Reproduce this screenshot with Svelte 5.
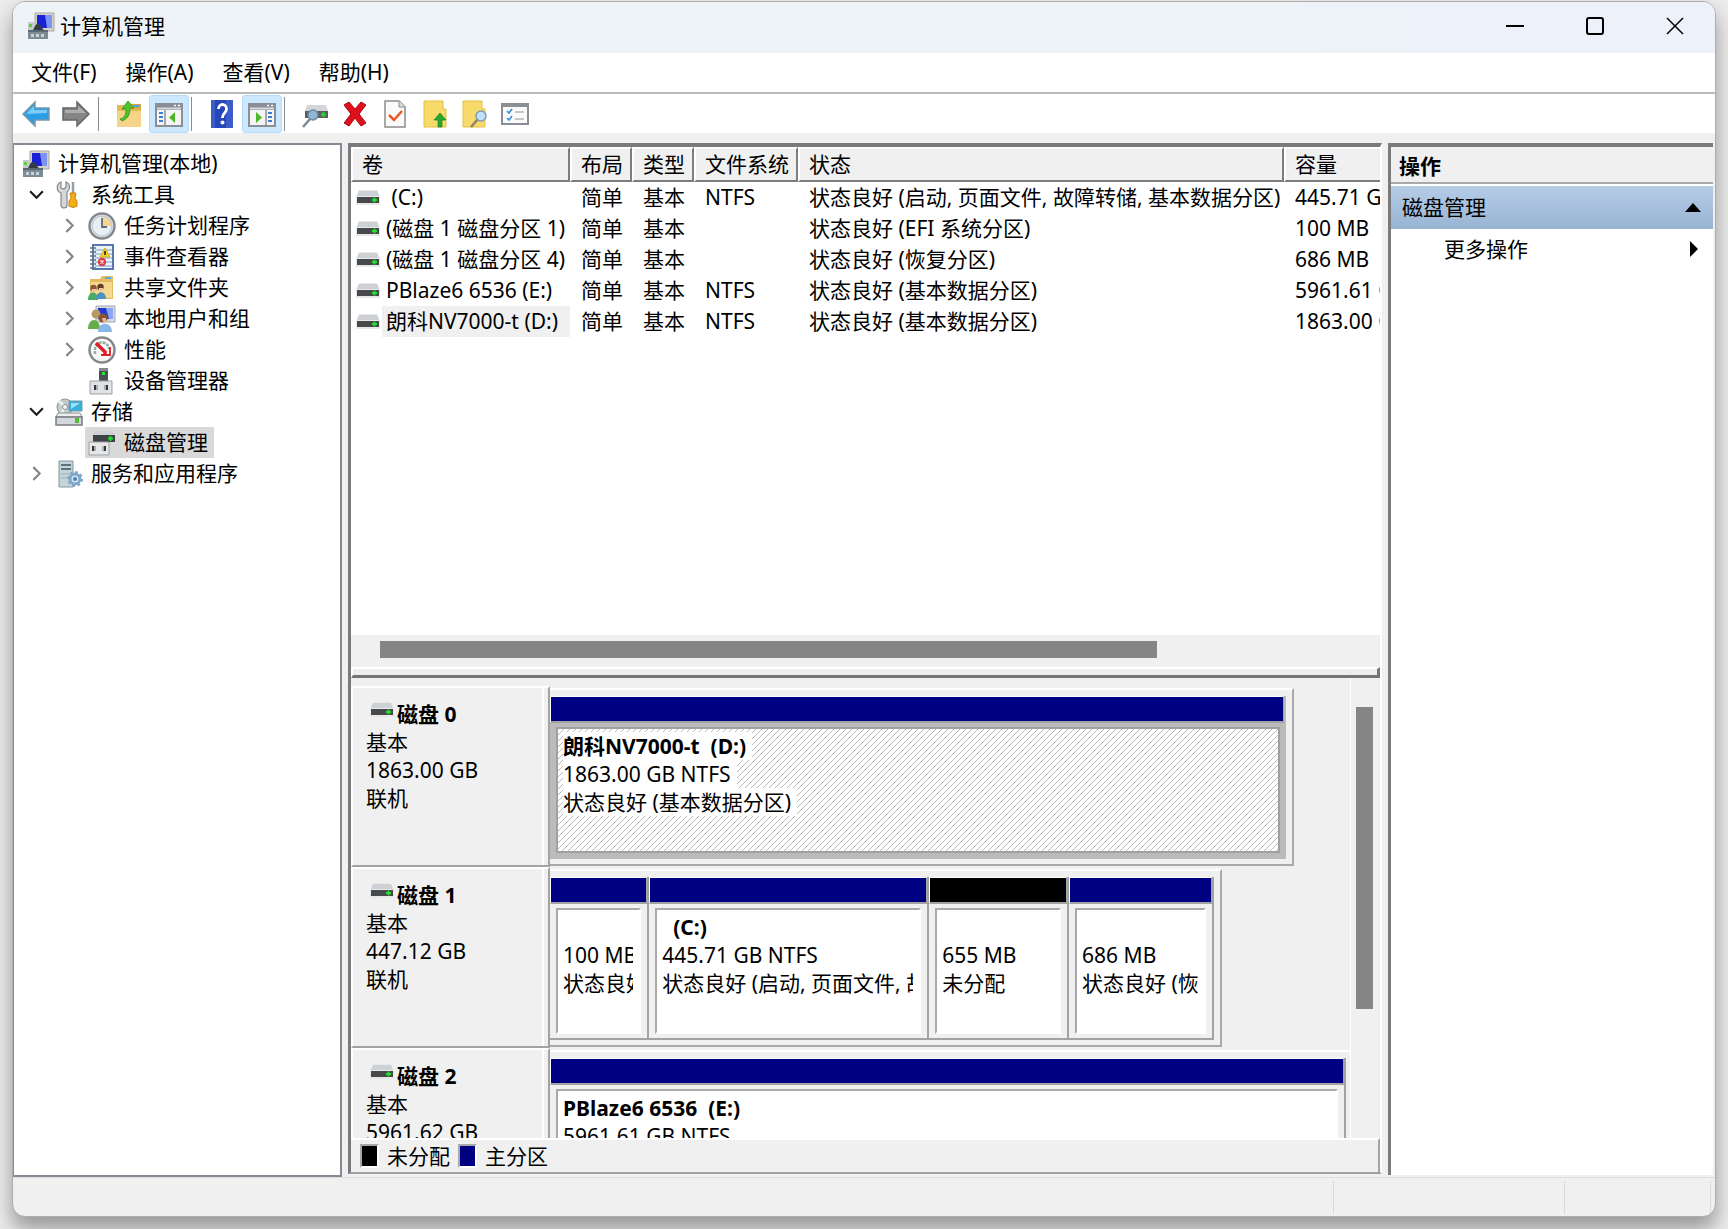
<script lang="ts">
    interface TreeNode {
        label: string;
        icon: string;
        depth: number;
        state?: "open" | "closed";
        selected?: boolean;
    }

    interface Part {
        name?: string;
        size: string;
        status: string;
        share: number;
        kind: "primary" | "free";
        selected?: boolean;
    }

    const menus = ["文件(F)", "操作(A)", "查看(V)", "帮助(H)"];

    const tools = [
        [
            { icon: "back", label: "后退" },
            { icon: "forward", label: "前进" },
        ],
        [
            { icon: "folder-up", label: "上移一级" },
            { icon: "pane-left", label: "显示/隐藏控制台树", on: true },
        ],
        [
            { icon: "help", label: "帮助" },
            { icon: "pane-right", label: "显示/隐藏操作窗格", on: true },
        ],
        [
            { icon: "rescan", label: "重新扫描磁盘" },
            { icon: "delete", label: "删除" },
            { icon: "check", label: "属性" },
            { icon: "note-up", label: "打开" },
            { icon: "note-find", label: "浏览" },
            { icon: "options", label: "设置" },
        ],
    ];

    const tree: TreeNode[] = [
        { label: "计算机管理(本地)", icon: "computer", depth: 0 },
        { label: "系统工具", icon: "tools", depth: 1, state: "open" },
        { label: "任务计划程序", icon: "clock", depth: 2, state: "closed" },
        { label: "事件查看器", icon: "events", depth: 2, state: "closed" },
        { label: "共享文件夹", icon: "shared", depth: 2, state: "closed" },
        { label: "本地用户和组", icon: "users", depth: 2, state: "closed" },
        { label: "性能", icon: "perf", depth: 2, state: "closed" },
        { label: "设备管理器", icon: "device", depth: 2 },
        { label: "存储", icon: "storage", depth: 1, state: "open" },
        { label: "磁盘管理", icon: "diskmgmt", depth: 2, selected: true },
        { label: "服务和应用程序", icon: "services", depth: 1, state: "closed" },
    ];

    const columns = ["卷", "布局", "类型", "文件系统", "状态", "容量"];

    const volumes = [
        { name: "\u00a0(C:)", fs: "NTFS", status: "状态良好 (启动, 页面文件, 故障转储, 基本数据分区)", size: "445.71 GB" },
        { name: "(磁盘 1 磁盘分区 1)", fs: "", status: "状态良好 (EFI 系统分区)", size: "100 MB" },
        { name: "(磁盘 1 磁盘分区 4)", fs: "", status: "状态良好 (恢复分区)", size: "686 MB" },
        { name: "PBlaze6 6536 (E:)", fs: "NTFS", status: "状态良好 (基本数据分区)", size: "5961.61 GB" },
        { name: "朗科NV7000-t (D:)", fs: "NTFS", status: "状态良好 (基本数据分区)", size: "1863.00 GB", selected: true },
    ];

    const disks: { name: string; size: string; width: number; parts: Part[] }[] = [
        {
            name: "磁盘 0",
            size: "1863.00 GB",
            width: 93,
            parts: [
                { name: "朗科NV7000-t  (D:)", size: "1863.00 GB NTFS", status: "状态良好 (基本数据分区)", share: 1, kind: "primary", selected: true },
            ],
        },
        {
            name: "磁盘 1",
            size: "447.12 GB",
            width: 84,
            parts: [
                { size: "100 MB", status: "状态良好 (EFI 系统分区)", share: 98, kind: "primary" },
                { name: "  (C:)", size: "445.71 GB NTFS", status: "状态良好 (启动, 页面文件, 故障转储, 基本数据分区)", share: 280, kind: "primary" },
                { size: "655 MB", status: "未分配", share: 139, kind: "free" },
                { size: "686 MB", status: "状态良好 (恢复分区)", share: 144, kind: "primary" },
            ],
        },
        {
            name: "磁盘 2",
            size: "5961.62 GB",
            width: 100,
            parts: [
                { name: "PBlaze6 6536  (E:)", size: "5961.61 GB NTFS", status: "状态良好 (基本数据分区)", share: 1, kind: "primary" },
            ],
        },
    ];
</script>

<svelte:head>
    <title>计算机管理</title>
</svelte:head>

{#snippet icon(name: string)}
    <svg class="icon" viewBox="0 0 28 28" aria-hidden="true">
        {#if name === "back"}
            <path d="M1 14 13 2v6h14v12H13v6z" fill="#2b9fe6" stroke="#7b97a8" stroke-width="1.5" />
            <path d="M4 14l8-8v4h13v3z" fill="#7dcdf6" />
        {:else if name === "forward"}
            <path d="M27 14 15 2v6H1v12h14v6z" fill="#858585" stroke="#666" stroke-width="1.5" />
            <path d="M24 13l-8-7v4H3v3z" fill="#adadad" />
        {:else if name === "folder-up"}
            <path d="M2 5h10l2 2h12v20H2z" fill="#e3b957" />
            <path d="M15 4h11v5H15z" fill="#d9a53d" />
            <path d="M19 5h5v2h-5z" fill="#4aa3e8" />
            <path d="M2 11h24v16H2z" fill="#f4d488" />
            <path d="M5 19c5-1 6-5 6-10H7l6-8 6 7h-4c0 8-3 11-8 13z" fill="#4fc32b" stroke="#2f8f1c" stroke-width=".8" />
        {:else if name === "pane-left" || name === "pane-right"}
            <g transform={name === "pane-right" ? "matrix(-1 0 0 1 28 0)" : undefined}>
                <path d="M1 4h26v22H1z" fill="#f5f5f5" stroke="#8a8f96" stroke-width="2" />
                <path d="M1 3h26v7H1z" fill="#8a8f96" />
                <path d="M2 8.500h24" stroke="#d8dbe0" stroke-width="2" />
                <path d="M10 10v15" stroke="#8a8f96" stroke-width="1.5" />
                <path d="M4 13h4M4 17h4M4 21h4" stroke="#3d7fd0" stroke-width="2" />
                <path d="M20 12v11l-6-5.500z" fill="#4fb52b" />
            </g>
            <path d="M19 5.500h2M23 5.500h2" stroke="#fff" stroke-width="1.5" />
        {:else if name === "help"}
            <path d="M3 0h22v28H3z" fill="#2746b8" />
            <path d="M3 0h4v28H3z" fill="#3d5cc8" />
            <path d="M18 0h7v28h-7z" fill="#3c5ccc" />
            <path d="M10.500 9c0-6 8-6 8 0 0 4-4 4-4 9" fill="none" stroke="#fff" stroke-width="2.800" />
            <circle cx="14.500" cy="22.500" r="2" fill="#fff" />
        {:else if name === "rescan"}
            <path d="M6 5h19l2 6H4z" fill="#d3d5d9" />
            <path d="M4 11h23v7H4z" fill="#595c60" />
            <path d="M20 14.500h5M22.500 12v5" stroke="#1fdc2c" stroke-width="2" />
            <path d="M2 27l7-8" stroke="#7d8a96" stroke-width="2.500" />
            <circle cx="12" cy="15" r="5" fill="#8fb8d6" stroke="#6f889b" stroke-width="1.500" />
        {:else if name === "delete"}
            <path d="M3 5l5-3 6 7 6-7 5 3-7 9 7 9-5 3-6-8-6 8-5-3 7-9z" fill="#df0f1c" stroke="#a80812" />
        {:else if name === "check"}
            <path d="M4 1h14l6 6v20H4z" fill="#fafafa" stroke="#8c8c8c" stroke-width="1.500" />
            <path d="M18 1v6h6" fill="#ddd" stroke="#8c8c8c" />
            <path d="M8 15l5 5 8-9" fill="none" stroke="#e65b27" stroke-width="2.500" />
        {:else if name === "note-up"}
            <path d="M3 1h19v8h3v18H3z" fill="#f7da6c" stroke="#e4c141" />
            <path d="M13 20l6-7 6 7h-4v7h-4v-7z" fill="#25a82c" stroke="#1b8222" stroke-width=".7" />
        {:else if name === "note-find"}
            <path d="M2 1h19v8h3v18H2z" fill="#f7da6c" stroke="#e4c141" />
            <path d="M10 27l7-8" stroke="#8d8468" stroke-width="2.500" />
            <circle cx="20" cy="16" r="5" fill="#c2e1f6" stroke="#7c9db5" stroke-width="1.500" />
        {:else if name === "options"}
            <path d="M1 4h26v20H1z" fill="#fafafa" stroke="#8a8f96" stroke-width="2" />
            <path d="M1 4h26v3H1z" fill="#8a8f96" />
            <path d="M6 11l2 2 3-4M6 18l2 2 3-4" fill="none" stroke="#2f8de4" stroke-width="1.600" />
            <path d="M14 12h9M14 19h9" stroke="#b5b5b5" stroke-width="1.500" />
        {:else if name === "computer"}
            <path d="M8 1h19v18H8z" fill="#d5d3c9" stroke="#a9a8a2" />
            <path d="M10 3h15v13H10z" fill="#1a20d8" />
            <path d="M18 3h7v13h-5z" fill="#7d92f2" />
            <path d="M1 10h6v8H1z" fill="#c3ccc6" />
            <path d="M2 12h3v3H2z" fill="#55d337" />
            <path d="M6 18c2-3 2-6 5-6 4 0 3 4 6 6z" fill="#333b46" />
            <path d="M1 18h20v9H1z" fill="#7b8c95" />
            <path d="M1 18h20v2H1z" fill="#596a73" />
            <path d="M4 22h3v3H4zM9 22h3v3H9zM14 22h3v3h-3z" fill="#c9d3d8" />
        {:else if name === "tools"}
            <path d="M6 1v6l3 1 2-2V1c5 2 4 8 1 10v13c0 4-6 4-6 0V12C1 10 1 3 6 1z" fill="#d5d8da" stroke="#83888c" stroke-width="1.200" />
            <path d="M18 1v12" stroke="#9a9da0" stroke-width="2.500" />
            <path d="M15 12h6l-1 5 2 3v5q-4 3-8 0v-5l2-3z" fill="#f3ae18" stroke="#c98409" />
        {:else if name === "clock"}
            <circle cx="14" cy="14" r="12.500" fill="#e9eff4" stroke="#85888b" stroke-width="2.500" />
            <path d="M14 14V4a10 10 0 0 1 10 10z" fill="#f6d592" />
            <circle cx="14" cy="14" r="10" fill="none" stroke="#c4cdd5" stroke-width="1.500" />
            <path d="M14 6v9h5" fill="none" stroke="#566f86" stroke-width="1.800" />
        {:else if name === "events"}
            <path d="M5 2h20v24H5z" fill="#eef4fc" stroke="#5977ae" stroke-width="2" />
            <path d="M7 7h17M7 11h17M7 15h17M7 19h17M7 23h17" stroke="#7d9ed2" stroke-width="1.200" />
            <path d="M2 5h6M2 9h6M2 13h6M2 17h6M2 21h6M2 25h6" stroke="#65717f" stroke-width="1.500" />
            <path d="M17 5l5 9H12z" fill="#f8d426" stroke="#d5ae12" />
            <path d="M17 8v4" stroke="#222" stroke-width="1.600" />
            <circle cx="14" cy="19" r="4.200" fill="#d9404a" />
            <path d="M12.500 17.500l3 3M15.500 17.500l-3 3" stroke="#fff" stroke-width="1.200" />
        {:else if name === "shared"}
            <path d="M2 5h10l2-3h11v23H2z" fill="#e3bb60" />
            <path d="M3 8h21v16H3z" fill="#f6d98e" />
            <path d="M17 3h6v2h-6z" fill="#5ca9e8" />
            <path d="M0 26c0-10 10-10 10 0z" fill="#4aab63" />
            <path d="M8 25c0-9 10-9 10 0z" fill="#4c94bf" />
            <circle cx="5.500" cy="14" r="3.200" fill="#8a5a3a" />
            <circle cx="12.500" cy="13" r="3.200" fill="#5f3e2a" />
            <path d="M4 15h4v3H4zM11 14h4v3h-4z" fill="#f1c7a0" />
        {:else if name === "users"}
            <path d="M8 1h19v16H8z" fill="#d8dbde" stroke="#a4a9ae" />
            <path d="M10 3h15v11H10z" fill="#2438cf" />
            <path d="M18 3h7v11h-4z" fill="#8ba5f2" />
            <path d="M0 24c0-12 12-12 12 0z" fill="#69ad4a" />
            <circle cx="8" cy="9" r="4.500" fill="#b79a63" />
            <path d="M10 27c0-11 14-11 14 0z" fill="#86b8e8" />
            <circle cx="15" cy="13" r="4.500" fill="#8a5432" />
            <path d="M14 13h4v4h-3z" fill="#e8b78b" />
        {:else if name === "perf"}
            <circle cx="14" cy="14" r="12.500" fill="#fafafa" stroke="#85888b" stroke-width="2.500" />
            <path d="M7 18v-4a7 7 0 0 1 14-1" fill="none" stroke="#8fb09b" stroke-width="2.500" stroke-dasharray="3 1" />
            <path d="M8 7l9 9v3" fill="none" stroke="#df1f28" stroke-width="3.500" />
            <path d="M13 19h9v-8" fill="none" stroke="#df1f28" stroke-width="1.800" />
        {:else if name === "device"}
            <path d="M11 1h9v13h-9z" fill="#4b4f52" />
            <path d="M11 1h9v3h-9z" fill="#85888a" />
            <path d="M14 5h3v3h-3z" fill="#2ee03a" />
            <path d="M2 14h22v13H2z" fill="#dfe1e4" stroke="#9da1a5" />
            <path d="M6 18h2v5H6zM18 18h2v5h-2z" fill="#33373a" />
            <path d="M8 18h2v5H8zM16 18h2v5h-2z" fill="#aaaeb2" />
        {:else if name === "storage"}
            <circle cx="10" cy="9" r="8" fill="#c3ccca" stroke="#919896" />
            <path d="M10 9L4 3M10 9l-4 7" stroke="#e9f4ef" stroke-width="3" />
            <circle cx="10" cy="9" r="2.500" fill="#fff" stroke="#888" />
            <path d="M14 3h13v10H14z" fill="#38b0dc" stroke="#7897a5" />
            <path d="M16 5h9L16 11z" fill="#9be1f4" />
            <path d="M3 15h22l2 4H1z" fill="#eee" stroke="#8a8d90" />
            <path d="M1 19h26v8H1z" fill="#d4d7db" stroke="#777b80" stroke-width="1.500" />
            <path d="M20 20h4v5h-4z" fill="#55bd2e" />
        {:else if name === "diskmgmt"}
            <path d="M7 2h17l3 4H4z" fill="#cfd2d5" />
            <path d="M5 6h22v7H5z" fill="#3f4346" />
            <path d="M20 9.500h5M22.500 7v5" stroke="#25e034" stroke-width="1.800" />
            <path d="M1 13h20v13H1z" fill="#e6e7e9" stroke="#9da1a5" />
            <path d="M4 17h2v5H4zM16 17h2v5h-2z" fill="#33373a" />
            <path d="M6 17h2v5H6zM14 17h2v5h-2z" fill="#aaaeb2" />
        {:else if name === "services"}
            <path d="M4 1h14v26H4z" fill="#c5d3da" stroke="#8597a1" />
            <path d="M6 5h10M6 9h10" stroke="#5d717d" stroke-width="2" />
            <path d="M6 14h9M6 18h7" stroke="#9db0bb" />
            <circle cx="20" cy="19" r="5" fill="#d5e6f4" stroke="#7fa6c9" stroke-width="3" />
            <circle cx="20" cy="19" r="7" fill="none" stroke="#7fa6c9" stroke-width="2" stroke-dasharray="2.600 2.900" />
            <circle cx="20" cy="19" r="2" fill="#4d81b0" />
        {/if}
    </svg>
{/snippet}

{#snippet drive()}
    <svg class="drive" viewBox="0 0 24 16" aria-hidden="true">
        <path d="M3 0h18l3 7v8H0V7z" fill="#e6e8ea" />
        <path d="M3 1h18l2 5H1z" fill="#cdd0d4" />
        <path d="M1 7h22v6H1z" fill="#48494b" />
        <path d="M16 10h5M18.500 7.500v5" stroke="#29dd35" stroke-width="1.800" />
    </svg>
{/snippet}

<div class="desktop">
    <div class="window">
        <header class="titlebar">
            {@render icon("computer")}
            <h1>计算机管理</h1>
            <div class="caption">
                <button type="button" aria-label="最小化">
                    <svg viewBox="0 0 20 20"><path d="M1 10h18" /></svg>
                </button>
                <button type="button" aria-label="最大化">
                    <svg viewBox="0 0 20 20"><rect x="2" y="2" width="16" height="16" rx="2" /></svg>
                </button>
                <button type="button" aria-label="关闭">
                    <svg class="thin" viewBox="0 0 20 20"><path d="M2 2l16 16M18 2L2 18" /></svg>
                </button>
            </div>
        </header>

        <nav class="menubar">
            {#each menus as menu}
                <button type="button">{menu}</button>
            {/each}
        </nav>

        <div class="toolbar" role="toolbar" aria-label="工具栏">
            {#each tools as group, i}
                {#if i > 0}
                    <span class="sep"></span>
                {/if}
                {#each group as tool}
                    <button type="button" class:on={tool.on} aria-label={tool.label}>
                        {@render icon(tool.icon)}
                    </button>
                {/each}
            {/each}
        </div>

        <main>
            <div class="tree" role="tree" aria-label="控制台树">
                {#each tree as node}
                    <div class="node depth-{node.depth}" role="treeitem" tabindex="-1" aria-selected={!!node.selected}>
                        {#if node.depth > 0}
                            <span class="twisty {node.state ?? ''}">
                                {#if node.state === "open"}
                                    <svg viewBox="0 0 16 16"><path d="M2 5l6 6 6-6" /></svg>
                                {:else if node.state === "closed"}
                                    <svg viewBox="0 0 16 16"><path d="M5 2l6 6-6 6" /></svg>
                                {/if}
                            </span>
                        {/if}
                        <span class="item" class:selected={node.selected}>
                            {@render icon(node.icon)}
                            {node.label}
                        </span>
                    </div>
                {/each}
            </div>

            <section class="content">
                <div class="volumes">
                    <div class="table-wrap">
                        <table>
                            <colgroup>
                                <col class="col-name" />
                                <col class="col-short" />
                                <col class="col-short" />
                                <col class="col-fs" />
                                <col class="col-status" />
                                <col class="col-size" />
                            </colgroup>
                            <thead>
                                <tr>
                                    {#each columns as column}
                                        <th scope="col">{column}</th>
                                    {/each}
                                </tr>
                            </thead>
                            <tbody>
                                {#each volumes as volume}
                                    <tr>
                                        <td class="name">
                                            <div>
                                                {@render drive()}
                                                <span class:selected={volume.selected}>{volume.name}</span>
                                            </div>
                                        </td>
                                        <td>简单</td>
                                        <td>基本</td>
                                        <td>{volume.fs}</td>
                                        <td>{volume.status}</td>
                                        <td>{volume.size}</td>
                                    </tr>
                                {/each}
                            </tbody>
                        </table>
                    </div>
                    <div class="hscroll"><div class="thumb"></div></div>
                    <div class="splitter"></div>
                </div>

                <div class="disks">
                    <div class="disk-list">
                        {#each disks as disk}
                            <div class="disk">
                                <div class="disk-info">
                                    <h2>{@render drive()}{disk.name}</h2>
                                    <p>基本</p>
                                    <p>{disk.size}</p>
                                    <p>联机</p>
                                </div>
                                <div class="strip-area">
                                    <div class="strip" class:full={disk.width === 100} style="width: {disk.width}%">
                                        {#each disk.parts as part}
                                            <div class="part {part.kind}" class:selected={part.selected} style="flex-grow: {part.share}">
                                                <div class="bar"></div>
                                                <div class="part-body">
                                                    <div class="box">
                                                        <div class="text">
                                                            <p><b>{part.name ?? "\u00a0"}</b></p>
                                                            <p><span>{part.size}</span></p>
                                                            <p><span>{part.status}</span></p>
                                                        </div>
                                                    </div>
                                                </div>
                                            </div>
                                        {/each}
                                    </div>
                                </div>
                            </div>
                        {/each}
                    </div>
                    <div class="vscroll"><div class="thumb"></div></div>
                </div>

                <div class="legend">
                    <span class="swatch free"></span>未分配
                    <span class="swatch primary"></span>主分区
                </div>
            </section>

            <aside class="actions">
                <h2>操作</h2>
                <button type="button" class="group">
                    磁盘管理
                    <svg viewBox="0 0 16 16"><path d="M0 12h16L8 3z" /></svg>
                </button>
                <button type="button" class="more">
                    更多操作
                    <svg viewBox="0 0 16 16"><path d="M5 0v16l8-8z" /></svg>
                </button>
            </aside>
        </main>

        <footer class="statusbar">
            <span class="pane"></span>
            <span class="pane mid"></span>
            <span class="pane end"></span>
        </footer>
    </div>
</div>

<style>
    :global(body) {
        background: #ececec;
    }

    .desktop {
        box-sizing: border-box;
        display: flex;
        height: 100vh;
        padding: 1px 12px 12px;
        overflow: hidden;
        font: 21px/31px "Noto Sans", "Noto Sans CJK SC", sans-serif;
        color: #000;
    }
    .desktop * {
        box-sizing: border-box;
    }

    h1,
    h2,
    p {
        margin: 0;
        font-size: 21px;
        font-weight: 400;
    }
    button {
        padding: 0;
        border: 0;
        background: none;
        color: inherit;
        font: inherit;
    }
    .icon {
        flex: none;
        width: 28px;
        height: 28px;
    }
    .drive {
        flex: none;
        width: 24px;
        height: 16px;
    }

    .window {
        display: flex;
        flex: 1;
        flex-direction: column;
        min-width: 0;
        border: 1px solid #adadad;
        border-radius: 13px;
        background: #f0f0f0;
        box-shadow: 0 12px 20px rgba(0, 0, 0, 0.36);
        overflow: hidden;
    }

    .titlebar {
        display: flex;
        flex: none;
        align-items: center;
        gap: 5px;
        height: 51px;
        padding: 0 0 3px 14px;
        background: linear-gradient(90deg, #eef3f7 70%, #edf2fa 85%);
    }
    .caption {
        display: flex;
        margin-left: auto;
    }
    .caption button {
        display: flex;
        align-items: center;
        justify-content: center;
        width: 80px;
        height: 48px;
    }
    .caption svg {
        width: 20px;
        height: 20px;
        fill: none;
        stroke: #000;
        stroke-width: 2;
    }
    .caption svg.thin {
        stroke-width: 1.5;
    }

    .menubar {
        display: flex;
        flex: none;
        gap: 3px;
        height: 41px;
        padding-left: 5px;
        border-bottom: 2px solid #b9babc;
        background: #fff;
    }
    .menubar button {
        padding: 0 13px;
    }

    .toolbar {
        display: flex;
        flex: none;
        height: 39px;
        padding: 1px 0 0 3px;
        background: #fff;
    }
    .toolbar button {
        display: flex;
        align-items: center;
        justify-content: center;
        width: 40px;
        height: 38px;
    }
    .toolbar .on {
        border: 1px solid #b5dcf9;
        border-radius: 3px;
        background: #cce8ff;
    }
    .sep {
        width: 1px;
        margin: 2px 10px 2px 2px;
        background: #8d8d8d;
    }

    main {
        display: grid;
        flex: 1;
        grid-template-columns: 329px minmax(0, 1fr) 327px;
        column-gap: 6px;
        min-height: 0;
        padding-top: 10px;
    }

    .tree {
        padding-top: 3px;
        border: 2px solid #858b94;
        border-left-width: 1px;
        background: #fff;
    }
    .node {
        display: flex;
        height: 31px;
        white-space: nowrap;
    }
    .depth-0 {
        padding-left: 5px;
    }
    .depth-1 {
        padding-left: 8px;
    }
    .depth-2 {
        padding-left: 41px;
    }
    .twisty {
        display: flex;
        align-items: center;
        justify-content: center;
        width: 28px;
        margin-right: 2px;
    }
    .twisty svg {
        width: 17px;
        height: 17px;
        fill: none;
        stroke: #868686;
        stroke-width: 2;
    }
    .twisty.open svg {
        stroke: #1b1b1b;
    }
    .item {
        display: flex;
        align-items: center;
        gap: 8px;
        padding: 0 6px 0 3px;
    }
    .item.selected {
        background: #d9d9d9;
    }

    .content {
        display: flex;
        flex-direction: column;
        min-height: 0;
        margin-bottom: 3px;
        border: solid;
        border-width: 4px 2px 2px 3px;
        border-color: #7b7b7b #fff #a0a0a0 #7b7b7b;
    }

    .volumes {
        display: flex;
        flex: 532 1 0;
        flex-direction: column;
        min-height: 0;
        background: #fff;
    }
    .table-wrap {
        flex: 1;
        min-height: 0;
        overflow: hidden;
    }
    table {
        width: 1083px;
        border-collapse: separate;
        border-spacing: 0;
        table-layout: fixed;
    }
    .col-name {
        width: 219px;
    }
    .col-short {
        width: 62px;
    }
    .col-fs {
        width: 104px;
    }
    .col-status {
        width: 486px;
    }
    .col-size {
        width: 150px;
    }
    th {
        height: 35px;
        padding: 0 0 0 9px;
        border: 2px solid;
        border-color: #fff #7d7d7d #7d7d7d #fff;
        background: #f0f0f0;
        font-weight: 400;
        text-align: left;
        white-space: nowrap;
    }
    td {
        height: 31px;
        padding: 0 0 0 11px;
        white-space: nowrap;
    }
    td.name {
        padding-left: 5px;
    }
    .name div {
        display: flex;
        align-items: center;
        gap: 2px;
    }
    .name span {
        flex: 1;
        padding-left: 4px;
    }
    .name .selected {
        background: #f0f0f0;
    }

    .hscroll {
        flex: none;
        height: 32px;
        padding: 6px 0;
        background: #f0f0f0;
    }
    .hscroll .thumb {
        width: 75.5%;
        height: 17px;
        margin-left: 29px;
        background: #858585;
    }
    .splitter {
        flex: none;
        height: 11px;
        border: solid;
        border-width: 2px 3px 3px 2px;
        border-color: #fff #757575 #757575 #fff;
        background: #ededed;
    }

    .disks {
        display: flex;
        flex: 461 1 0;
        min-height: 0;
    }
    .disk-list {
        flex: 1;
        min-width: 0;
        padding-top: 8px;
        border-right: 1px solid #fff;
        overflow: hidden;
    }
    .disk {
        display: flex;
        height: 181px;
    }
    .disk-info {
        width: 199px;
        padding: 12px 0 0 13px;
        border: 2px solid;
        border-color: #fff #a3a3a3 #a3a3a3 #fff;
        line-height: 28px;
        box-shadow: inset -4px 0 0 #f0f0f0, inset -6px 0 0 #fff;
    }
    .disk-info h2 {
        display: flex;
        gap: 3px;
        padding-left: 4px;
        font-weight: 700;
        white-space: pre;
    }
    .disk-info .drive,
    .disk-info svg {
        margin-top: 2px;
    }
    .strip-area {
        flex: 1;
        min-width: 0;
        padding-top: 2px;
    }
    .strip {
        display: flex;
        height: 178px;
        padding: 6px 6px 5px 0;
        border: 2px solid;
        border-color: #fff #a9a9a9 #a9a9a9 transparent;
        border-left-width: 0;
    }
    .strip.full {
        padding-right: 4px;
        border-right: 0;
    }
    .part {
        display: flex;
        flex: 1 1 0;
        flex-direction: column;
        min-width: 0;
        border-right: 2px solid #a3a3a3;
        border-bottom: 2px solid #a3a3a3;
    }
    .bar {
        flex: none;
        height: 27px;
        border: 1px solid #fff;
        border-right-color: #a3a3a3;
        border-bottom: 2px solid #a3a3a3;
        background: #000082;
    }
    .free .bar {
        background: #000;
    }
    .part-body {
        display: flex;
        flex: 1;
        min-height: 0;
        padding: 4px 4px 4px 6px;
    }
    .box {
        flex: 1;
        min-width: 0;
        padding: 3px 6px 0 5px;
        border: 2px solid;
        border-color: #a9a9a9 #fff #fff #a9a9a9;
        background: #fff;
    }
    .text {
        overflow: hidden;
        line-height: 28px;
    }
    .text p {
        white-space: pre;
    }
    .primary:not(.selected) .part-body,
    .free .part-body {
        padding-right: 6px;
    }
    .part.selected {
        border-color: #bbb;
    }
    .selected .part-body {
        background: #bbb;
    }
    .selected .box {
        border-color: #a0a0a0;
        background: linear-gradient(
            135deg,
            #b9b9b9 6%,
            #fff 6% 44%,
            #b9b9b9 44% 56%,
            #fff 56% 94%,
            #b9b9b9 94%
        );
        background-size: 6px 6px;
    }
    .selected .text b,
    .selected .text span {
        padding-right: 6px;
        background: #fff;
    }

    .vscroll {
        width: 29px;
        padding: 29px 6px 0 5px;
    }
    .vscroll .thumb {
        width: 17px;
        height: 70%;
        background: #858585;
    }

    .legend {
        display: flex;
        flex: none;
        align-items: center;
        gap: 8px;
        height: 34px;
        padding-left: 9px;
        border-top: 2px solid #fff;
        border-right: 2px solid #a3a3a3;
    }
    .swatch {
        width: 19px;
        height: 24px;
        border: 2px solid;
        border-color: #a9a9a9 #fff #fff #a9a9a9;
    }
    .swatch.free {
        background: #000;
    }
    .swatch.primary {
        background: #000082;
    }

    .actions {
        display: flex;
        flex-direction: column;
        margin: 0 2px 2px 0;
        border: solid #7b7b7b;
        border-width: 4px 0 0 3px;
        background: #fff;
    }
    .actions h2 {
        height: 37px;
        padding-left: 8px;
        border-bottom: 2px solid #a9a9a9;
        background: #f0f0f0;
        font-weight: 700;
        line-height: 38px;
    }
    .actions button {
        display: flex;
        align-items: center;
        justify-content: space-between;
    }
    .actions .group {
        height: 43px;
        margin-top: 2px;
        padding: 0 12px 0 11px;
        background: linear-gradient(#b6cde8, #98b3d2);
    }
    .actions .more {
        height: 40px;
        padding: 0 12px 0 53px;
    }
    .actions svg {
        width: 16px;
        height: 16px;
    }

    .statusbar {
        display: flex;
        flex: none;
        height: 39px;
        padding-bottom: 2px;
        border-top: 1px solid #dcdcdc;
    }
    .pane {
        flex: 1;
        margin-top: 3px;
        border-right: 1px solid #dadada;
    }
    .pane.mid {
        flex: none;
        width: 231px;
    }
    .pane.end {
        flex: none;
        width: 146px;
        margin-right: 4px;
    }
</style>
